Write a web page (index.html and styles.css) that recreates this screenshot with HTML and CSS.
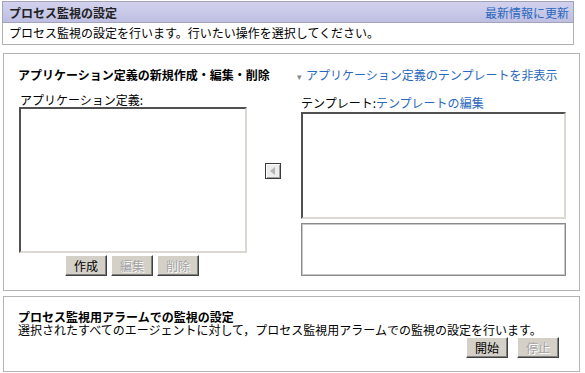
FILE: index.html
```html
<!DOCTYPE html>
<html>
<head>
    <title>プロセス監視の設定</title>
    <link rel="stylesheet" href="styles.css">
</head>
<body>
    <div class="page">
        <div class="title-bar">
            <span class="title">プロセス監視の設定</span>
            <a class="link refresh" href="#">最新情報に更新</a>
        </div>
        <div class="desc">プロセス監視の設定を行います。行いたい操作を選択してください。</div>

        <div class="panel main-panel">
            <div class="col-left">
                <h2 class="panel-heading">アプリケーション定義の新規作成・編集・削除</h2>
                <div class="field-label">アプリケーション定義:</div>
                <div class="listbox app-list"></div>
                <div class="btn-row">
                    <button class="btn">作成</button>
                    <button class="btn" disabled>編集</button>
                    <button class="btn" disabled>削除</button>
                </div>
            </div>
            <div class="col-mid">
                <button class="arrow-btn" title="追加">
                    <svg width="8" height="10" viewBox="0 0 8 10"><path d="M6 1 L1 5 L6 9 Z" fill="#b4b4b4"/></svg>
                </button>
            </div>
            <div class="col-right">
                <a class="link toggle" href="#"><span class="caret">▾</span>アプリケーション定義のテンプレートを非表示</a>
                <div class="field-label tpl-label">テンプレート:<a class="link" href="#">テンプレートの編集</a></div>
                <div class="listbox tpl-list"></div>
                <div class="tpl-detail"></div>
            </div>
        </div>

        <div class="panel alarm-panel">
            <h2 class="panel-heading alarm-heading">プロセス監視用アラームでの監視の設定</h2>
            <div class="alarm-text">選択されたすべてのエージェントに対して，プロセス監視用アラームでの監視の設定を行います。</div>
            <div class="alarm-btns">
                <button class="btn">開始</button>
                <button class="btn" disabled>停止</button>
            </div>
        </div>
    </div>
</body>
</html>
```

FILE: styles.css
```css
* {
    box-sizing: border-box;
}
body {
    margin: 0;
    font-family: "Noto Sans CJK JP", "DejaVu Sans", sans-serif;
    font-size: 12px;
    color: #000;
    background-color: #fff;
}
.page {
    padding-top: 1px;
}
.link {
    color: #2a68bd;
    text-decoration: none;
}
.title-bar {
    display: flex;
    justify-content: space-between;
    align-items: center;
    width: 572px;
    height: 22px;
    margin-left: 2px;
    padding: 0 4px 0 6px;
    background: linear-gradient(#d2d2ee, #bebee2);
    border: 1px solid #a4a4b8;
}
.title {
    font-weight: bold;
    color: #222;
}
.desc {
    width: 572px;
    height: 22px;
    margin-left: 2px;
    padding-left: 6px;
    line-height: 20px;
    border: 1px solid #b0b0b0;
    border-top: none;
}
.panel {
    width: 577px;
    margin-left: 3px;
    border: 1px solid #b4b4b4;
}
.main-panel {
    display: flex;
    height: 238px;
    margin-top: 8px;
    padding-top: 13px;
}
.panel-heading {
    margin: 0;
    font-size: 12px;
    font-weight: bold;
    line-height: 16px;
    white-space: nowrap;
}
.col-left {
    width: 254px;
    padding-left: 14px;
}
.field-label {
    margin-top: 10px;
    line-height: 14px;
    padding-left: 2px;
}
.listbox {
    background-color: #fff;
    border: 2px solid;
    border-color: #505050 #dcd9d2 #dcd9d2 #505050;
}
.app-list {
    width: 228px;
    height: 146px;
    margin-left: 1px;
}
.btn-row {
    display: flex;
    gap: 4px;
    margin-top: 2px;
    padding-left: 47px;
}
.btn {
    width: 42px;
    height: 21px;
    padding: 0;
    font-family: inherit;
    font-size: 12px;
    color: #000;
    background-color: #d4d0c8;
    border: 1px solid;
    border-color: #fff #404040 #404040 #fff;
    box-shadow: inset -1px -1px 0 #808080;
}
.btn:disabled {
    color: #a4a4a4;
    text-shadow: 1px 1px 0 #fff;
}
.col-mid {
    width: 39px;
    padding-top: 96px;
    padding-left: 7px;
}
.arrow-btn {
    display: flex;
    align-items: center;
    justify-content: center;
    width: 16px;
    height: 16px;
    padding: 0;
    background-color: #ececec;
    border: 1px solid #3a3a3a;
    box-shadow: inset 1px 1px 0 #fff, inset -1px -1px 0 #a0a0a0;
}
.col-right {
    width: 275px;
}
.toggle {
    display: block;
    line-height: 16px;
    white-space: nowrap;
}
.caret {
    display: inline-block;
    width: 9px;
    font-size: 9px;
    color: #888;
}
.tpl-label {
    margin-top: 11px;
    padding-left: 4px;
}
.tpl-list {
    width: 265px;
    height: 107px;
    margin-top: 2px;
    margin-left: 4px;
}
.tpl-detail {
    width: 265px;
    height: 53px;
    margin-top: 4px;
    margin-left: 4px;
    border: 1px solid #8a8a8a;
    box-shadow: inset 0 0 0 1px #c8c8c8;
}
.alarm-panel {
    height: 76px;
    margin-top: 5px;
    padding: 13px 20px 0 14px;
}
.alarm-heading {
    line-height: 13px;
}
.alarm-text {
    line-height: 13px;
    white-space: nowrap;
}
.alarm-btns {
    display: flex;
    justify-content: flex-end;
    gap: 9px;
    margin-top: 1px;
}
```
